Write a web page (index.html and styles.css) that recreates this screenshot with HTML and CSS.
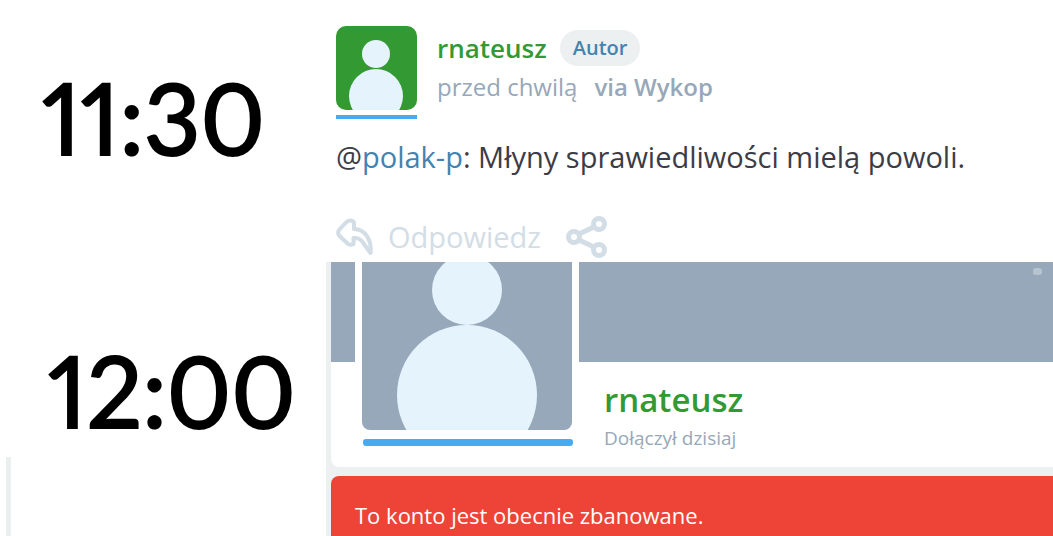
FILE: index.html
```
<!DOCTYPE html>
<html lang="pl">
<head>
<meta charset="utf-8">
<meta name="viewport" content="width=device-width, initial-scale=1">
<title>rnateusz</title>
<link rel="stylesheet" href="styles.css">
</head>
<body>
<main class="page">
  <section class="row">
    <div class="clock"><time class="time" datetime="11:30">11:30</time></div>
    <article class="comment">
      <header class="comment-head">
        <div class="avatar-small">
          <svg class="portrait-small" viewBox="0 0 81 84" aria-hidden="true">
            <circle cx="40" cy="28" r="14"/>
            <circle cx="40" cy="70" r="27"/>
          </svg>
        </div>
        <div class="meta">
          <div class="author"><a class="name" href="#">rnateusz</a><span class="badge">Autor</span></div>
          <div class="when"><span>przed chwilą</span><strong class="via">via Wykop</strong></div>
        </div>
      </header>
      <p class="message">@<a class="mention" href="#">polak-p</a>: Młyny sprawiedliwości mielą powoli.</p>
      <div class="actions">
        <button class="action" type="button">
          <svg class="icon-reply" viewBox="0 0 38 40" aria-hidden="true">
            <path d="M14 3.500Q12 3.500 9 6.500L3 13Q1 16 3.500 19L11 26Q14 29 17.500 27V21C26 20 27 27 34.500 36C36 23 29 12 18 12V6Q17.500 3.500 14 3.500Z"/>
          </svg>
          <span>Odpowiedz</span>
        </button>
        <button class="action" type="button" aria-label="Udostępnij">
          <svg class="icon-share" viewBox="0 0 42 44" aria-hidden="true">
            <circle cx="8" cy="22" r="5.500"/><circle cx="33" cy="9" r="5.500"/><circle cx="33" cy="35" r="5.500"/>
            <path d="M13 19L28 12M13 25L28 32"/>
          </svg>
        </button>
      </div>
    </article>
  </section>
  <section class="row row-profile">
    <div class="clock clock-late"><time class="time" datetime="12:00">12:00</time></div>
    <div class="profile">
      <article class="card">
        <div class="cover"><span class="cover-dot"></span></div>
        <div class="card-body">
          <div class="avatar-column">
            <div class="avatar-large">
              <svg class="portrait-large" viewBox="0 0 210 168" aria-hidden="true">
                <circle cx="105" cy="28" r="35"/>
                <circle cx="105" cy="133" r="70"/>
              </svg>
            </div>
            <div class="gender-bar"></div>
          </div>
          <div class="identity">
            <h1 class="profile-name">rnateusz</h1>
            <p class="joined">Dołączył dzisiaj</p>
          </div>
        </div>
      </article>
      <p class="banned" role="alert">To konto jest obecnie zbanowane.</p>
    </div>
  </section>
</main>
</body>
</html>
```
FILE: styles.css
```
* { box-sizing: border-box; }

body {
  margin: 0;
  background: #fff;
  color: #3c3c46;
  font-family: "Open Sans", "Noto Sans", sans-serif;
}

.page { min-height: 100vh; display: flex; flex-direction: column; overflow: hidden; }
.row { display: grid; grid-template-columns: 326px minmax(0, 1fr); }
.row-profile { flex: 1; }

.clock { padding: 67px 0 0 42px; }
.clock-late { display: flex; flex-direction: column; padding: 78px 0 0 48px; }
.clock-late::after {
  content: "";
  flex: 1;
  width: 5px;
  margin: 17px 0 0 -42px;
  background: #ebefef;
}
.time {
  display: block;
  color: #000;
  font: 400 98px/100px Lato, sans-serif;
  font-feature-settings: "pnum";
  -webkit-text-stroke: 2px #000;
}

.comment { padding: 26px 10px 3px; }
.comment-head { display: flex; gap: 20px; }
.avatar-small { width: 81px; padding-bottom: 5px; border-bottom: 4px solid #46abf2; }
.portrait-small { display: block; width: 81px; height: 84px; border-radius: 10px; background: #393; fill: #e5f4fc; }
.author { display: flex; align-items: center; gap: 13px; height: 44px; }
.name { color: #393; font-size: 26px; font-weight: 600; line-height: 36px; text-decoration: none; }
.badge { padding: 0 13px; border-radius: 18px; background: #ecf0f0; color: #4383af; font-size: 20px; font-weight: 600; line-height: 36px; }
.when { display: flex; gap: 17px; color: #96a8b9; font-size: 24px; line-height: 34px; }
.via { font-weight: 600; }
.message { margin: 17px 0 0; font-size: 29px; line-height: 42px; white-space: nowrap; }
.mention { color: #4383af; text-decoration: none; }

.actions { display: flex; gap: 25px; margin-top: 37px; }
.action { display: flex; align-items: center; gap: 14px; padding: 0; border: 0; background: none; color: #d3dde5; font: 400 29px/42px "Open Sans", "Noto Sans", sans-serif; }
.icon-reply, .icon-share { fill: none; stroke: #d3dde5; stroke-width: 5; stroke-linejoin: round; }
.icon-reply { width: 38px; height: 40px; stroke-width: 4; }
.icon-share { width: 42px; height: 44px; }

.profile { display: flex; flex-direction: column; gap: 9px; padding-left: 5px; background: #ecf0f0; }
.card { overflow: hidden; border-radius: 0 0 0 8px; background: #fff; }
.cover { display: flex; justify-content: flex-end; height: 100px; padding: 6px 11px; background: #96a8b9; }
.cover-dot { width: 9px; height: 7px; border-radius: 3px; background: #b7c4d0; }
.card-body { display: flex; gap: 25px; padding: 0 0 15px 24px; }
.avatar-column { margin-top: -100px; }
.avatar-large { padding: 0 7px 9px; background: #fff; }
.portrait-large { display: block; width: 210px; height: 168px; border-radius: 0 0 8px 8px; background: #96a8b9; fill: #e5f4fc; }
.gender-bar { height: 7px; margin: 0 6px 0 8px; border-radius: 3px; background: #46abf2; }
.identity { padding-top: 14px; }
.profile-name { margin: 0; color: #393; font-size: 33px; font-weight: 600; line-height: 48px; }
.joined { margin: 0; color: #96a8b9; font-size: 19px; line-height: 28px; }
.banned { flex: 1; margin: 0; padding: 21px 24px 0; border-radius: 8px 0 0 0; background: #ee4337; color: #fff; font-size: 22px; line-height: 36px; }
```
